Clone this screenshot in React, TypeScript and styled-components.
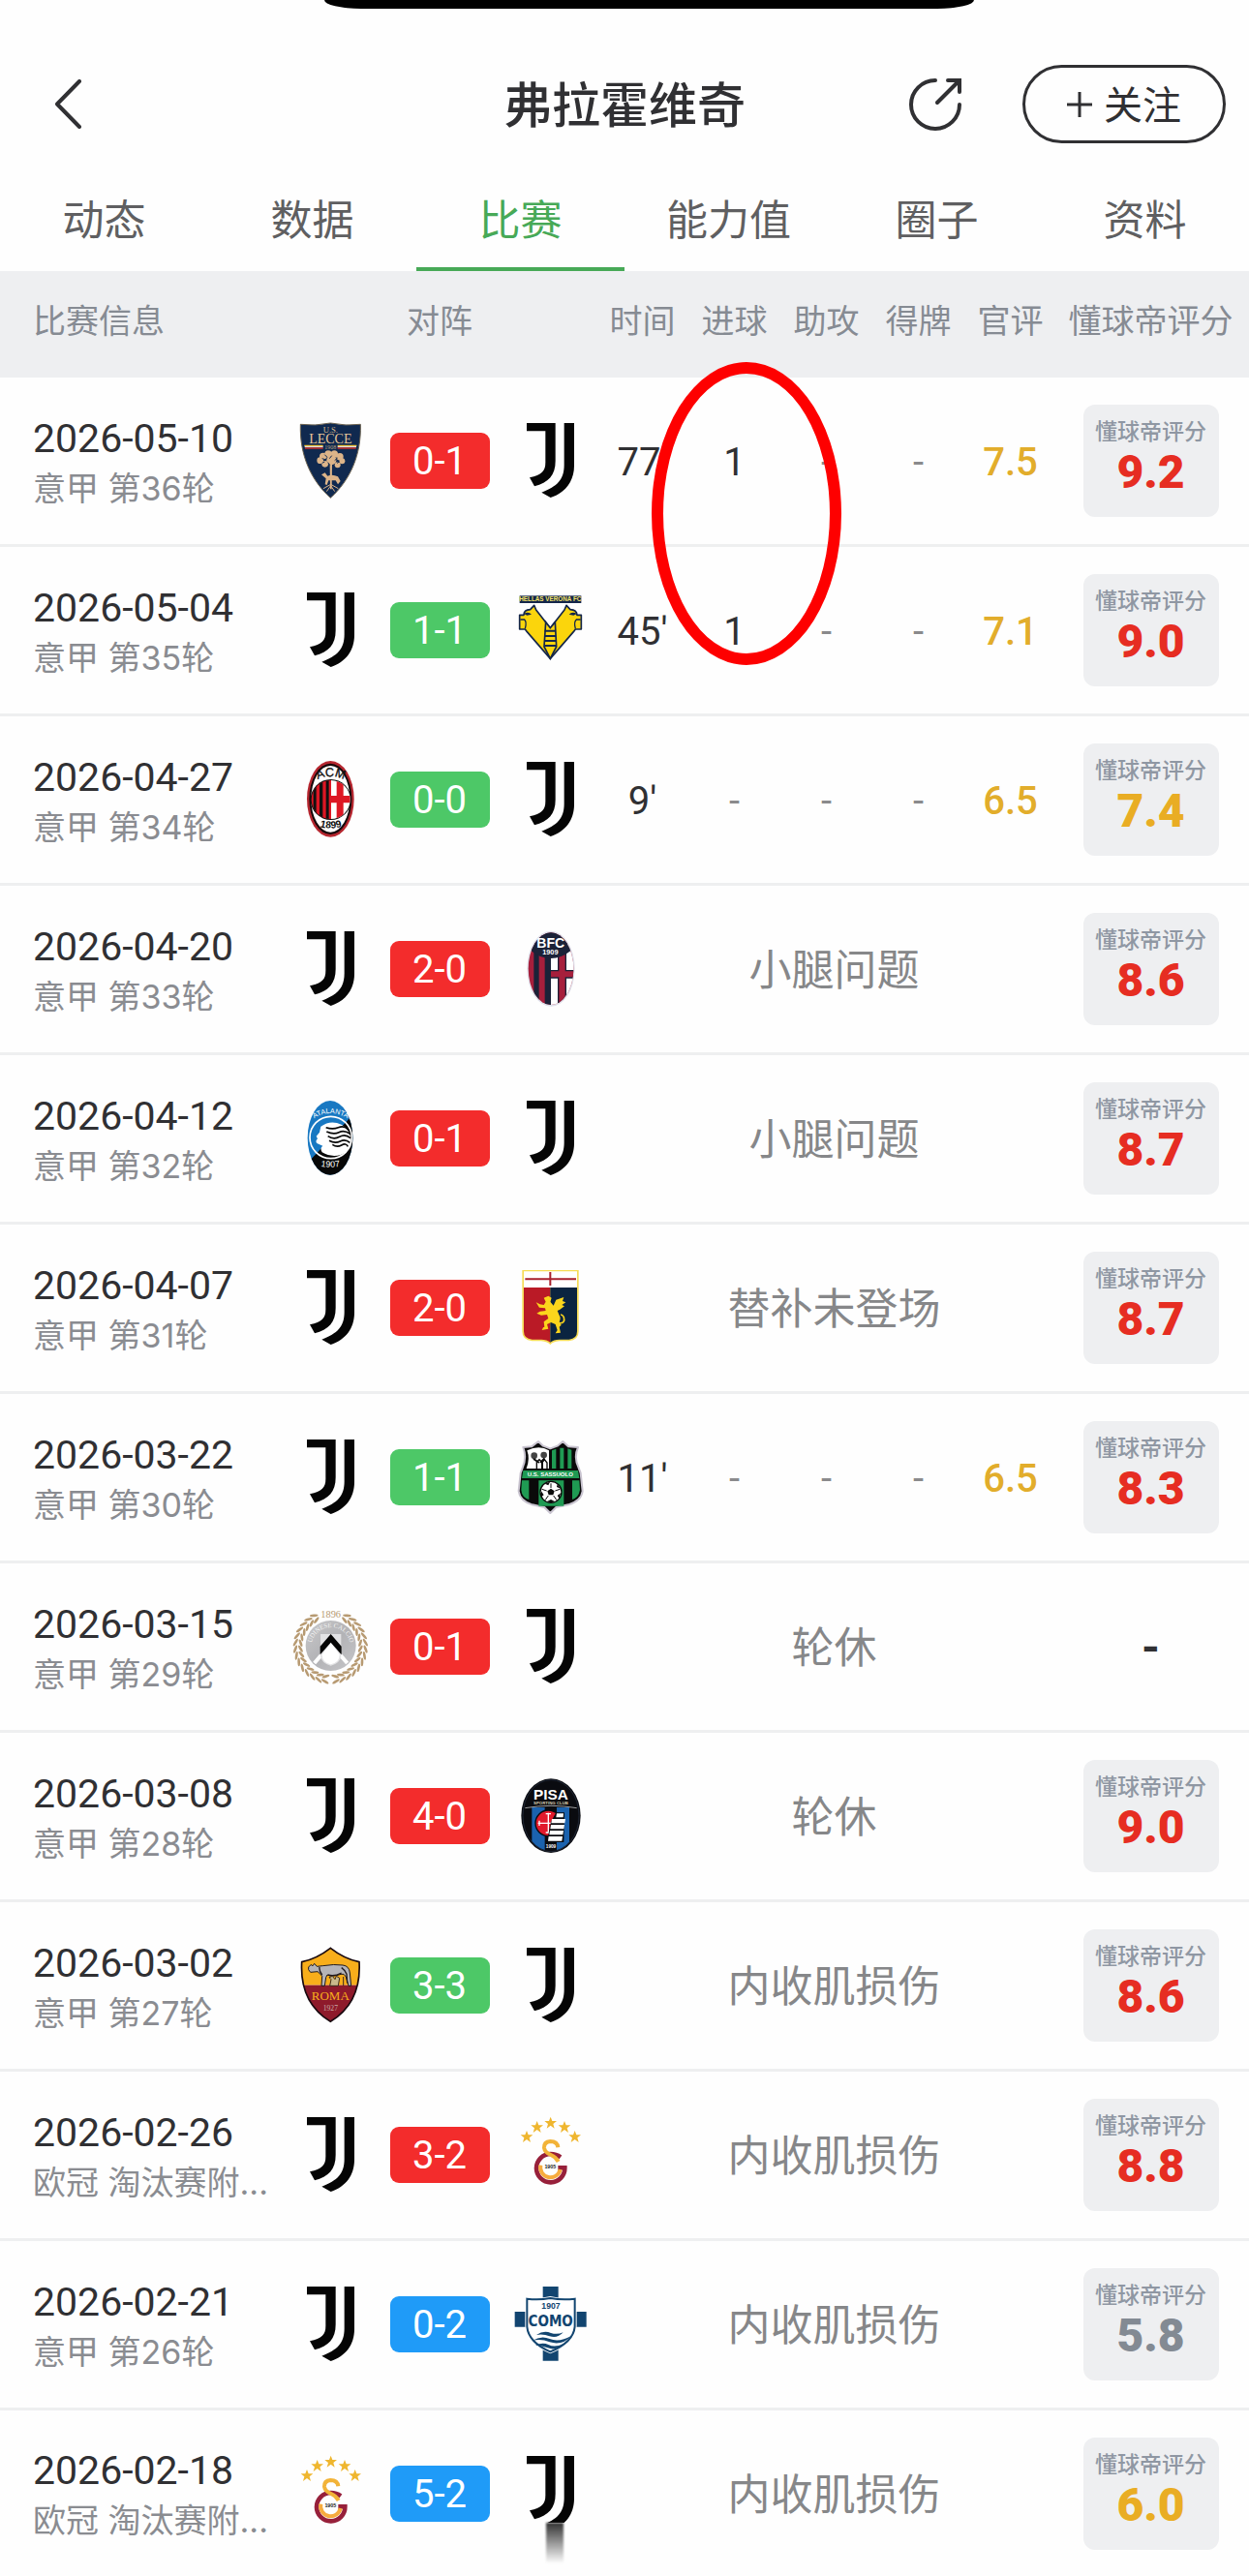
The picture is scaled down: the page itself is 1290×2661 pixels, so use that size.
import type { ReactNode } from "react";
import styled, { createGlobalStyle } from "styled-components";

type Club =
    | "juventus" | "lecce" | "verona" | "milan" | "bologna" | "atalanta" | "genoa"
    | "sassuolo" | "udinese" | "pisa" | "roma" | "galatasaray" | "como";

type Result = "win" | "draw" | "loss";
type Level = "high" | "mid" | "low";

interface Match {
    date: string;
    round: string;
    home: Club;
    away: Club;
    score: string;
    result: Result;
    stats?: string[];
    official?: string;
    status?: string;
    rating?: string;
    level?: Level;
}

const resultColor: Record<Result, string> = {
    win: "#f32c2c",
    draw: "#4dc867",
    loss: "#1f9bf8",
};

const levelColor: Record<Level, string> = {
    high: "#e62d22",
    mid: "#e9ad24",
    low: "#838a93",
};

const tabs = ["动态", "数据", "比赛", "能力值", "圈子", "资料"];

const matches: Match[] = [
    { date: "2026-05-10", round: "意甲 第36轮", home: "lecce", away: "juventus", score: "0-1", result: "win", stats: ["77'", "1", "-", "-"], official: "7.5", rating: "9.2", level: "high" },
    { date: "2026-05-04", round: "意甲 第35轮", home: "juventus", away: "verona", score: "1-1", result: "draw", stats: ["45'", "1", "-", "-"], official: "7.1", rating: "9.0", level: "high" },
    { date: "2026-04-27", round: "意甲 第34轮", home: "milan", away: "juventus", score: "0-0", result: "draw", stats: ["9'", "-", "-", "-"], official: "6.5", rating: "7.4", level: "mid" },
    { date: "2026-04-20", round: "意甲 第33轮", home: "juventus", away: "bologna", score: "2-0", result: "win", status: "小腿问题", rating: "8.6", level: "high" },
    { date: "2026-04-12", round: "意甲 第32轮", home: "atalanta", away: "juventus", score: "0-1", result: "win", status: "小腿问题", rating: "8.7", level: "high" },
    { date: "2026-04-07", round: "意甲 第31轮", home: "juventus", away: "genoa", score: "2-0", result: "win", status: "替补未登场", rating: "8.7", level: "high" },
    { date: "2026-03-22", round: "意甲 第30轮", home: "juventus", away: "sassuolo", score: "1-1", result: "draw", stats: ["11'", "-", "-", "-"], official: "6.5", rating: "8.3", level: "high" },
    { date: "2026-03-15", round: "意甲 第29轮", home: "udinese", away: "juventus", score: "0-1", result: "win", status: "轮休" },
    { date: "2026-03-08", round: "意甲 第28轮", home: "juventus", away: "pisa", score: "4-0", result: "win", status: "轮休", rating: "9.0", level: "high" },
    { date: "2026-03-02", round: "意甲 第27轮", home: "roma", away: "juventus", score: "3-3", result: "draw", status: "内收肌损伤", rating: "8.6", level: "high" },
    { date: "2026-02-26", round: "欧冠 淘汰赛附...", home: "juventus", away: "galatasaray", score: "3-2", result: "win", status: "内收肌损伤", rating: "8.8", level: "high" },
    { date: "2026-02-21", round: "意甲 第26轮", home: "juventus", away: "como", score: "0-2", result: "loss", status: "内收肌损伤", rating: "5.8", level: "low" },
    { date: "2026-02-18", round: "欧冠 淘汰赛附...", home: "galatasaray", away: "juventus", score: "5-2", result: "loss", status: "内收肌损伤", rating: "6.0", level: "mid" },
];

const serif = '"Liberation Serif", serif';
const sans = '"Liberation Sans", sans-serif';

const Star = ({ x, y }: { x: number; y: number }) => (
    <path
        transform={`translate(${x} ${y})`}
        fill="#efb62f"
        d="M0-19 5-6H19L8 3 12 17 0 8-12 17-8 3-19-6H-5Z"
    />
);

// leaves of the wreath, in degrees from the top
const leaves = Array.from({ length: 14 }, (_, i) => 28 + i * 11);

const crests: Record<Club, ReactNode> = {
    juventus: (
        <g fill="#050505">
            <path d="M45 0H134V118C134 162 112 185 69 196L54 169C92 160 103 149 103 122V25H45Z" />
            <path d="M161 0H192V132C192 180 165 216 119 231L91 215C140 196 161 176 161 130Z" />
        </g>
    ),
    lecce: (
        <g>
            <path d="M25 4Q70 10 118 0Q166 10 211 4C214 100 178 178 118 232C58 178 22 100 25 4Z" fill="#10294f" stroke="#6d6350" strokeWidth="3" />
            <text x="118" y="30" textAnchor="middle" fontFamily={serif} fontSize="26" fill="#d9b98a">U.S.</text>
            <text x="118" y="63" textAnchor="middle" fontFamily={serif} fontSize="42" fill="#e8c79a">LECCE</text>
            <path d="M37 70H95M140 70H199" stroke="#f0c53a" strokeWidth="4" />
            <path d="M38 74H95M140 74H198" stroke="#fff" strokeWidth="3" />
            <path d="M39 78H95M140 78H197" stroke="#c8312e" strokeWidth="4" />
            <text x="118" y="82" textAnchor="middle" fontFamily={serif} fontSize="18" fill="#b9a080">1908</text>
            <g fill="#dcb489">
                <circle cx="86" cy="116" r="10" />
                <circle cx="95" cy="103" r="11" />
                <circle cx="111" cy="96" r="11" />
                <circle cx="130" cy="96" r="11" />
                <circle cx="147" cy="104" r="11" />
                <circle cx="154" cy="118" r="9" />
                <circle cx="121" cy="115" r="15" />
                <circle cx="101" cy="127" r="10" />
                <circle cx="140" cy="130" r="9" />
                <path d="M116 125H123L122 205H117Z" />
                <path d="M90 160L101 154L109 164Q124 158 141 166L149 180L141 190L134 178L112 178L107 192L101 190L104 172Z" />
            </g>
            <path d="M119 190L96 203M119 194L106 212M119 190L142 203M119 194L131 212" stroke="#dcb489" strokeWidth="3" fill="none" />
            <path d="M92 110L104 114M100 98L108 106M122 101L115 110M140 108L131 116M110 122L116 130M146 120L138 124M92 124L100 120" stroke="#10294f" strokeWidth="3" />
        </g>
    ),
    verona: (
        <g>
            <rect x="23" y="10" width="191" height="23" fill="#14264a" />
            <text x="118" y="28" textAnchor="middle" fontFamily={sans} fontWeight="700" fontSize="19" fill="#f5e36b">HELLAS VERONA FC</text>
            <path d="M68 40L74 54L118 110L162 54L168 40L180 53Q200 54 201 70H214V114H196L190 122L118 205L46 122L40 114H23V70H36Q36 54 56 53Z" fill="#fbd50c" stroke="#14264a" strokeWidth="5" strokeLinejoin="round" />
            <path d="M104 92L118 110L133 92L137 168L118 205L99 168Z" fill="#fbd50c" stroke="#14264a" strokeWidth="5" />
            <path d="M101 116H135V122H101ZM101 132H135V138H101ZM100 147H136V153H100ZM100 162H136V168H100Z" fill="#14264a" />
            <path d="M36 66Q50 58 60 68L46 71ZM201 66Q186 58 176 68L190 71Z" fill="#14264a" />
            <path d="M25 84H38Q46 92 40 112M212 84H199Q190 92 196 112" fill="none" stroke="#14264a" strokeWidth="4" />
        </g>
    ),
    milan: (
        <g>
            <ellipse cx="118" cy="115" rx="73" ry="118" fill="#b5262f" />
            <ellipse cx="118" cy="115" rx="66" ry="110" fill="#17090b" />
            <ellipse cx="118" cy="115" rx="60" ry="103" fill="#fff" />
            <clipPath id="milanDisc"><circle cx="119" cy="117" r="60" /></clipPath>
            <circle cx="119" cy="117" r="63" fill="#111" />
            <g clipPath="url(#milanDisc)">
                <rect x="56" y="54" width="66" height="126" fill="#dd1724" />
                <path d="M65 54H74V180H65ZM84 54H94V180H84ZM104 54H113V180H104Z" fill="#111" />
                <rect x="120" y="54" width="66" height="126" fill="#fff" />
                <path d="M137 54H158V105H186V127H158V180H137V127H120V105H137Z" fill="#dd1724" />
            </g>
            <path id="milanTop" d="M66 62Q118 28 172 62" fill="none" />
            <text fontFamily={sans} fontSize="38" fill="#111" stroke="#111" textAnchor="middle">
                <textPath href="#milanTop" startOffset="50%">ACM</textPath>
            </text>
            <path id="milanLow" d="M70 196Q118 216 168 196" fill="none" />
            <text fontFamily={sans} fontWeight="700" fontSize="31" fill="#111" textAnchor="middle">
                <textPath href="#milanLow" startOffset="50%">1899</textPath>
            </text>
        </g>
    ),
    bologna: (
        <g>
            <clipPath id="bolognaOval"><ellipse cx="120" cy="116" rx="70" ry="112" /></clipPath>
            <ellipse cx="120" cy="116" rx="74" ry="117" fill="#dfe0ea" />
            <g clipPath="url(#bolognaOval)">
                <rect x="44" y="0" width="152" height="234" fill="#a61f3c" />
                <path d="M67 60H83V234H67ZM101 60H120V234H101Z" fill="#1b2238" />
                <rect x="120" y="40" width="80" height="194" fill="#fff" />
                <path d="M141 60H168V120H200V146H168V234H141V146H120V120H141Z" fill="#1b2238" />
                <path d="M145 60H164V124H200V142H164V234H145V142H120V124H145Z" fill="#a61f3c" />
                <path d="M62 0H166L182 60Q152 84 120 84Q86 84 58 60Z" fill="#1b2238" />
            </g>
            <text x="119" y="52" textAnchor="middle" fontFamily={sans} fontWeight="700" fontSize="42" fill="#fff">BFC</text>
            <text x="118" y="72" textAnchor="middle" fontFamily={sans} fontWeight="700" fontSize="22" fill="#fff">1909</text>
        </g>
    ),
    atalanta: (
        <g>
            <clipPath id="atalantaOval"><ellipse cx="117" cy="115" rx="70" ry="115" /></clipPath>
            <g clipPath="url(#atalantaOval)">
                <rect x="40" y="0" width="160" height="234" fill="#1878c2" />
                <path d="M200 30L40 200V234H200Z" fill="#070707" />
            </g>
            <circle cx="119" cy="114" r="65" fill="none" stroke="#fff" strokeWidth="5" />
            <path d="M88 80Q118 58 152 74Q182 92 181 126Q176 158 150 168Q118 176 92 160Q84 146 94 140L76 132Q70 126 78 118L74 110L84 98Z" fill="#fff" />
            <path d="M104 83Q125 90 142 83T172 88M106 96Q128 106 144 98T178 102M110 110Q128 122 146 112T180 116M114 124Q132 134 148 126T178 130M124 136Q138 146 152 138T172 142" fill="none" stroke="#070707" strokeWidth="5" />
            <path id="atalantaTop" d="M60 60Q117 18 178 60" fill="none" />
            <text fontFamily={sans} fontSize="22" fill="#fff" textAnchor="middle">
                <textPath href="#atalantaTop" startOffset="50%">ATALANTA</textPath>
            </text>
            <path id="atalantaLow" d="M80 202Q117 210 156 202" fill="none" />
            <text fontFamily={sans} fontSize="27" fill="#fff" textAnchor="middle">
                <textPath href="#atalantaLow" startOffset="50%">1907</textPath>
            </text>
        </g>
    ),
    genoa: (
        <g>
            <path d="M31 0H206V190Q206 218 176 220H146Q126 222 118 231Q110 222 90 220H62Q31 218 31 190Z" fill="#f6dc55" />
            <path d="M36 4H201V54H36Z" fill="#fff" />
            <path d="M36 54H118V224Q108 215 90 215H62Q36 213 36 190Z" fill="#ba1a26" />
            <path d="M118 54H201V190Q201 213 176 215H146Q128 215 118 224Z" fill="#0b2440" />
            <path d="M40 28H198M118 6V48" stroke="#a8212d" strokeWidth="6" />
            <path d="M98 86L112 80L122 86L118 98L128 110L136 92L160 84L156 96L166 100L154 108L162 112L148 122L140 126L146 140Q152 148 146 160L152 170L146 176L150 194L134 196L140 186L134 168L120 162L108 168L112 182L92 186L96 178L100 176L98 160L112 150L108 138L90 140L76 134L86 128L104 126L102 118L84 116L74 100L86 106L98 108L104 98Z" fill="#fbd51c" />
            <path d="M144 164Q166 166 160 146Q156 138 150 138" fill="none" stroke="#fbd51c" strokeWidth="5" />
        </g>
    ),
    sassuolo: (
        <g>
            <path d="M34 24L60 22L81 6L96 20L118 28L140 20L157 6L174 22L204 24Q190 56 206 88L212 104L218 160Q214 190 174 202L136 210L118 228L100 210L62 202Q24 190 20 160L26 104L32 88Q46 56 34 24Z" fill="#0a0a0a" stroke="#c9c4d0" strokeWidth="6" strokeLinejoin="round" />
            <path d="M46 34Q84 16 114 34V90H44Q56 60 46 34Z" fill="#fff" />
            <path d="M123 34L136 29V90H123ZM148 26H160V90H148ZM172 28L184 32V90H172Z" fill="#1f9a53" />
            <path d="M76 90V70L84 62L92 70V90M94 90V70L100 62L108 72V90" fill="#fff" stroke="#0a0a0a" strokeWidth="4" />
            <circle cx="68" cy="50" r="10" fill="#444" />
            <circle cx="98" cy="48" r="10" fill="#444" />
            <path d="M66 60L84 72M100 58L88 72" stroke="#0a0a0a" strokeWidth="6" />
            <path d="M34 96H204L208 120H30Z" fill="#1f9a53" />
            <path d="M30 127H52V186Q30 180 28 156ZM82 127H160V206H82ZM186 127H208L210 156Q206 180 186 186Z" fill="#1f9a53" />
            <text x="118" y="115" textAnchor="middle" fontFamily={sans} fontWeight="700" fontSize="18" fill="#fff">U.S. SASSUOLO</text>
            <circle cx="120" cy="163" r="33" fill="#fff" stroke="#0a0a0a" strokeWidth="4" />
            <path d="M120 152L131 160L127 172H113L109 160ZM101 137L117 131L112 142ZM140 138L150 152L138 147ZM90 160L98 172L90 178ZM150 166L146 182L140 174ZM108 192L120 186L132 192L120 196Z" fill="#0a0a0a" />
            <path d="M120 150V136M133 159L148 154M128 174L138 188M112 174L102 188M107 159L92 154" stroke="#0a0a0a" strokeWidth="3" />
        </g>
    ),
    udinese: (
        <g>
            {leaves.map((deg) => (
                <g key={deg} fill="#b79a72">
                    <g transform={`rotate(${deg} 118 117)`}>
                        <ellipse cx="118" cy="8" rx="13" ry="4" transform="rotate(-24 118 8)" />
                        <ellipse cx="118" cy="24" rx="12" ry="4" transform="rotate(26 118 24)" />
                    </g>
                    <g transform={`rotate(${-deg} 118 117)`}>
                        <ellipse cx="118" cy="8" rx="13" ry="4" transform="rotate(24 118 8)" />
                        <ellipse cx="118" cy="24" rx="12" ry="4" transform="rotate(-26 118 24)" />
                    </g>
                </g>
            ))}
            <text x="119" y="26" textAnchor="middle" fontFamily={serif} fontSize="31" fill="#b79a72">1896</text>
            <linearGradient id="udineseDisc" x1="0" x2="1" y1="0" y2="1">
                <stop offset="0" stopColor="#c9c9cb" />
                <stop offset="50%" stopColor="#b3b3b6" />
                <stop offset="1" stopColor="#c6c6c9" />
            </linearGradient>
            <circle cx="119" cy="114" r="78" fill="url(#udineseDisc)" />
            <path d="M68 168L108 122M170 168L130 122" stroke="#fff" strokeWidth="12" />
            <path d="M87 78H151V146Q148 168 119 176Q90 168 87 146Z" fill="#e3e3e5" />
            <path d="M119 104L146 142Q146 166 119 172Q92 166 92 142Z" fill="#fff" />
            <path d="M119 78L152 116V142L119 104L86 142V116Z" fill="#060606" />
            <path id="udineseTop" d="M58 118A61 61 0 0 1 180 118" fill="none" />
            <text fontFamily={serif} fontSize="20" fill="#f4f4f4" textAnchor="middle">
                <textPath href="#udineseTop" startOffset="50%">UDINESE CALCIO</textPath>
            </text>
        </g>
    ),
    pisa: (
        <g>
            <clipPath id="pisaOval"><ellipse cx="120" cy="116" rx="86" ry="109" /></clipPath>
            <ellipse cx="120" cy="116" rx="92" ry="115" fill="#0a0b10" />
            <ellipse cx="120" cy="116" rx="87" ry="111" fill="none" stroke="#283347" strokeWidth="2" />
            <path d="M61 90H101V234H61ZM138 90H177V234H138Z" fill="#1b62ae" clipPath="url(#pisaOval)" />
            <path d="M40 92Q120 78 200 92" stroke="#e8e8e8" strokeWidth="2" fill="none" />
            <text x="120" y="66" textAnchor="middle" fontFamily={sans} fontWeight="700" fontSize="46" fill="#fff">PISA</text>
            <text x="120" y="80" textAnchor="middle" fontFamily={sans} fontWeight="700" fontSize="13" fill="#d8c9ad">SPORTING CLUB</text>
            <circle cx="112" cy="139" r="40" fill="#e1192b" stroke="#0a0b10" strokeWidth="4" />
            <path d="M112 107V171M80 139H140M104 110H120M104 168H120M84 131V147" stroke="#fff" strokeWidth="4" fill="none" />
            <path d="M136 106H162L160 198H108L114 164L120 134Z" fill="#0a0b10" />
            <path d="M138 109H159L158 121H136ZM123 126H165L163 139H121ZM120 144H162L160 157H118ZM117 162H159L157 175H115ZM113 180H156L154 194H111Z" fill="#fff" />
            <text x="120" y="217" textAnchor="middle" fontFamily={sans} fontWeight="700" fontSize="14" fill="#fff">1909</text>
        </g>
    ),
    roma: (
        <g>
            <clipPath id="romaShield"><path d="M118 1Q160 34 207 44C212 130 182 190 118 229C54 190 24 130 29 44Q76 34 118 1Z" /></clipPath>
            <g clipPath="url(#romaShield)">
                <rect x="20" y="0" width="200" height="116" fill="#f8ae1b" />
                <rect x="20" y="116" width="200" height="120" fill="#8e1a2b" />
            </g>
            <path d="M118 1Q160 34 207 44C212 130 182 190 118 229C54 190 24 130 29 44Q76 34 118 1Z" fill="none" stroke="#190a10" strokeWidth="5" />
            <path d="M50 60L58 52L62 57L68 49L76 58L94 56Q130 50 156 54Q176 56 178 78L182 118H174L166 90Q160 78 150 82Q124 92 108 84L104 92L100 118H90L92 88Q82 76 78 74L56 76L50 68Z" fill="#b5b4b8" stroke="#20191c" strokeWidth="3" strokeLinejoin="round" />
            <path d="M84 60Q82 72 92 84M152 62Q162 68 168 82L170 110M110 84Q130 90 152 78" stroke="#20191c" strokeWidth="4" fill="none" />
            <path d="M116 118L120 98L114 92L124 88L132 98L136 88L146 94L142 118ZM158 118V90" fill="#c9b98c" stroke="#3a2a20" strokeWidth="3" />
            <text x="118" y="162" textAnchor="middle" fontFamily={serif} fontSize="39" fill="#f8ae1b">ROMA</text>
            <text x="118" y="195" textAnchor="middle" fontFamily={serif} fontSize="23" fill="#c9a9a6">1927</text>
        </g>
    ),
    galatasaray: (
        <g>
            <Star x={119} y={18} />
            <Star x={77} y={31} />
            <Star x={162} y={31} />
            <Star x={45} y={61} />
            <Star x={194} y={61} />
            <path d="M150 124Q136 114 119 114A44 44 0 1 0 163 157H142" fill="none" stroke="#97203a" strokeWidth="14" />
            <path d="M88 149A31 31 0 1 0 149 162" fill="none" stroke="#f7ac3e" strokeWidth="12" />
            <path d="M142 94Q140 75 118 75Q98 77 99 95Q101 109 120 117Q136 124 143 138" fill="none" stroke="#f2b338" strokeWidth="12" />
            <text x="118" y="158" textAnchor="middle" fontFamily={sans} fontWeight="700" fontSize="16" fill="#222">1905</text>
        </g>
    ),
    como: (
        <g>
            <path d="M95 0H143V230H95ZM8 78H230V125H8Z" fill="#124570" />
            <path d="M40 34Q80 40 118 30Q158 40 200 34V124Q196 178 118 208Q44 178 40 124Z" fill="#fff" />
            <path d="M46 38Q84 42 118 36Q154 42 194 38V124Q190 172 118 202Q50 172 46 124Z" fill="none" stroke="#124570" strokeWidth="6" />
            <text x="120" y="69" textAnchor="middle" fontFamily={sans} fontWeight="700" fontSize="26" fill="#124570">1907</text>
            <text x="119" y="123" textAnchor="middle" fontFamily='"Liberation Sans Narrow", "DejaVu Sans Condensed", sans-serif' fontWeight="700" fontSize="45" fill="#124570">COMO</text>
            <path d="M75 150Q98 134 120 144Q140 150 158 142Q140 162 116 154Q96 146 75 150ZM62 168Q90 150 116 162Q146 174 184 152Q156 184 116 172Q88 160 62 168ZM72 182Q94 172 112 180Q132 190 158 178Q136 200 110 190Q92 182 72 182Z" fill="#124570" />
        </g>
    ),
};

const Crest = ({ club }: { club: Club }) => (
    <CrestSvg viewBox="0 0 234 234" role="img" aria-label={club}>
        {crests[club]}
    </CrestSvg>
);

const MatchRow = ({ match }: { match: Match }) => (
    <tr>
        <InfoCell>
            <DateText>{match.date}</DateText>
            <RoundText>{match.round}</RoundText>
        </InfoCell>
        <Cell>
            <Versus>
                <Crest club={match.home} />
                <Score $result={match.result}>{match.score}</Score>
                <Crest club={match.away} />
            </Versus>
        </Cell>
        {match.stats?.map((value, i) => (
            <StatCell key={i} $empty={value === "-"}>{value}</StatCell>
        ))}
        {match.official && <OfficialCell>{match.official}</OfficialCell>}
        {match.status && <StatusCell colSpan={5}>{match.status}</StatusCell>}
        <RatingCell>
            {match.rating ? (
                <RatingCard>
                    <RatingLabel>懂球帝评分</RatingLabel>
                    <RatingValue $level={match.level ?? "low"}>{match.rating}</RatingValue>
                </RatingCard>
            ) : "-"}
        </RatingCell>
    </tr>
);

const App = () => {
    return (
        <Page>
            <GlobalStyle />
            <Island />
            <NavBar>
                <BackButton type="button" aria-label="返回">
                    <svg width="27" height="51" viewBox="0 0 27 51" fill="none" stroke="#303033" strokeWidth="4" strokeLinecap="round" strokeLinejoin="round">
                        <path d="M25 2L2 25.500L25 49" />
                    </svg>
                </BackButton>
                <Title>弗拉霍维奇</Title>
                <Actions>
                    <IconButton type="button" aria-label="分享">
                        <svg width="54" height="54" viewBox="0 0 54 54" fill="none" stroke="#303033" strokeWidth="4" strokeLinecap="round">
                            <path d="M27 2A25 25 0 1 0 52 27" />
                            <path d="M29 25L50 4" />
                            <path d="M40 2H52V14" strokeLinejoin="miter" />
                        </svg>
                    </IconButton>
                    <FollowButton type="button">
                        <svg width="26" height="26" viewBox="0 0 26 26" stroke="#303033" strokeWidth="3" aria-hidden="true">
                            <path d="M13 0V26M0 13H26" />
                        </svg>
                        <FollowText>关注</FollowText>
                    </FollowButton>
                </Actions>
            </NavBar>
            <TabBar>
                {tabs.map((tab) => (
                    <Tab key={tab} href="#" $active={tab === "比赛"}>{tab}</Tab>
                ))}
            </TabBar>
            <MatchTable>
                <colgroup>
                    <col />
                    <VersusCol />
                    <StatCol span={5} />
                    <RatingCol />
                </colgroup>
                <thead>
                    <tr>
                        <HeadCell $first>比赛信息</HeadCell>
                        <HeadCell>对阵</HeadCell>
                        <HeadCell>时间</HeadCell>
                        <HeadCell>进球</HeadCell>
                        <HeadCell>助攻</HeadCell>
                        <HeadCell>得牌</HeadCell>
                        <HeadCell>官评</HeadCell>
                        <HeadCell>懂球帝评分</HeadCell>
                    </tr>
                </thead>
                <tbody>
                    {matches.map((match) => (
                        <MatchRow key={match.date} match={match} />
                    ))}
                </tbody>
            </MatchTable>
            <Ring />
            <Smudge />
        </Page>
    );
};

const GlobalStyle = createGlobalStyle`
    * {
        box-sizing: border-box;
    }

    body {
        margin: 0;
        background: #fefefe;
        color: #303033;
        font-family: Roboto, "Noto Sans CJK SC", sans-serif;
    }

    button {
        padding: 0;
        border: 0;
        background: none;
        color: inherit;
        font-family: inherit;
        cursor: pointer;
    }
`;

const Page = styled.div`
    position: relative;
    overflow: hidden;
`;

const Island = styled.div`
    width: 52%;
    height: 9px;
    margin-left: 26%;
    border-radius: 0 0 38px 38px / 0 0 9px 9px;
    background: #000;
`;

const NavBar = styled.header`
    display: grid;
    grid-template-columns: 1fr auto 1fr;
    align-items: center;
    padding: 58px 24px 28px;
`;

const BackButton = styled.button`
    display: flex;
    justify-self: start;
    margin-left: 33px;
`;

const Title = styled.h1`
    margin: 0;
    padding-top: 4px;
    font-size: 50px;
    line-height: 60px;
    font-weight: 500;
`;

const Actions = styled.div`
    display: flex;
    align-items: center;
    justify-content: flex-end;
    gap: 63px;
`;

const IconButton = styled.button`
    display: flex;
`;

const FollowButton = styled.button`
    display: flex;
    align-items: center;
    justify-content: center;
    gap: 12px;
    width: 210px;
    height: 81px;
    border: 3px solid #303033;
    border-radius: 41px;
    font-size: 40px;
`;

const FollowText = styled.span`
    padding-bottom: 4px;
`;

const TabBar = styled.nav`
    display: flex;
    height: 104px;
`;

const Tab = styled.a<{ $active: boolean }>`
    flex: 1;
    border-bottom: 4px solid ${({ $active }) => ($active ? "#47a957" : "transparent")};
    color: ${({ $active }) => ($active ? "#47a957" : "#5f5f61")};
    font-size: 43px;
    line-height: 104px;
    text-align: center;
    text-decoration: none;
`;

const MatchTable = styled.table`
    width: 100%;
    table-layout: fixed;
    border-spacing: 0;
`;

const VersusCol = styled.col`
    width: 324px;
`;

const StatCol = styled.col`
    width: 95px;
`;

const RatingCol = styled.col`
    width: 199px;
`;

const HeadCell = styled.th<{ $first?: boolean }>`
    height: 110px;
    padding: 0 0 12px ${({ $first }) => ($first ? "34px" : "0")};
    background: #eeeff1;
    color: #868b93;
    font-size: 34px;
    font-weight: 400;
    text-align: ${({ $first }) => ($first ? "left" : "center")};
    white-space: nowrap;

    &:last-child {
        padding-right: 4px;
    }
`;

const Cell = styled.td`
    height: 175px;
    padding: 0;
    border-bottom: 3px solid #eeeff0;
    font-size: 40px;
    text-align: center;
    white-space: nowrap;

    tr:last-child > & {
        height: 171px;
        border-bottom: 0;
    }
`;

const InfoCell = styled(Cell)`
    padding-top: 5px;
    padding-left: 34px;
    text-align: left;
`;

const DateText = styled.div`
    font-size: 41px;
    line-height: 52px;
`;

const RoundText = styled.div`
    color: #8a8c91;
    font-family: Inter, "Noto Sans CJK SC", sans-serif;
    font-size: 34px;
    line-height: 52px;
`;

const Versus = styled.div`
    display: flex;
    align-items: center;
    justify-content: center;
    gap: 23px;
`;

const CrestSvg = styled.svg`
    flex: none;
    width: 78px;
    height: 78px;
    overflow: visible;
`;

const Score = styled.span<{ $result: Result }>`
    width: 103px;
    padding-top: 2px;
    border-radius: 9px;
    background: ${({ $result }) => resultColor[$result]};
    color: #fff;
    line-height: 56px;
`;

const StatCell = styled(Cell)<{ $empty: boolean }>`
    padding-top: 2px;
    color: ${({ $empty }) => ($empty ? "#8a8a8c" : "#303033")};
`;

const OfficialCell = styled(Cell)`
    padding-top: 2px;
    color: #e2ad2b;
    font-weight: 500;
`;

const StatusCell = styled(Cell)`
    padding-bottom: 4px;
    padding-left: 16px;
    color: #868789;
    font-size: 44px;
`;

const RatingCell = styled(Cell)`
    padding-right: 4px;
    font-size: 48px;
    font-weight: 700;
`;

const RatingCard = styled.div`
    display: flex;
    flex-direction: column;
    width: 140px;
    height: 116px;
    margin: 0 auto;
    padding-top: 15px;
    border-radius: 12px;
    background: #eeeff1;
`;

const RatingLabel = styled.span`
    color: #8f97a3;
    font-size: 23px;
    font-weight: 500;
    line-height: 28px;
`;

const RatingValue = styled.strong<{ $level: Level }>`
    color: ${({ $level }) => levelColor[$level]};
    line-height: 54px;
`;

// hand-drawn mark over the goals column
const Ring = styled.div`
    position: absolute;
    top: 374px;
    left: calc(100% - 617px);
    width: 196px;
    height: 313px;
    border: 12px solid #fe0000;
    border-radius: 50%;
    pointer-events: none;
`;

const Smudge = styled.div`
    position: absolute;
    bottom: 0;
    left: calc(100% - 750px);
    width: 100px;
    height: 55px;
    background: #fefefe;

    &::before {
        content: "";
        position: absolute;
        top: 0;
        left: 24px;
        width: 18px;
        height: 42px;
        background: linear-gradient(#333, #fefefe);
        filter: blur(1px);
    }
`;

export default App;
